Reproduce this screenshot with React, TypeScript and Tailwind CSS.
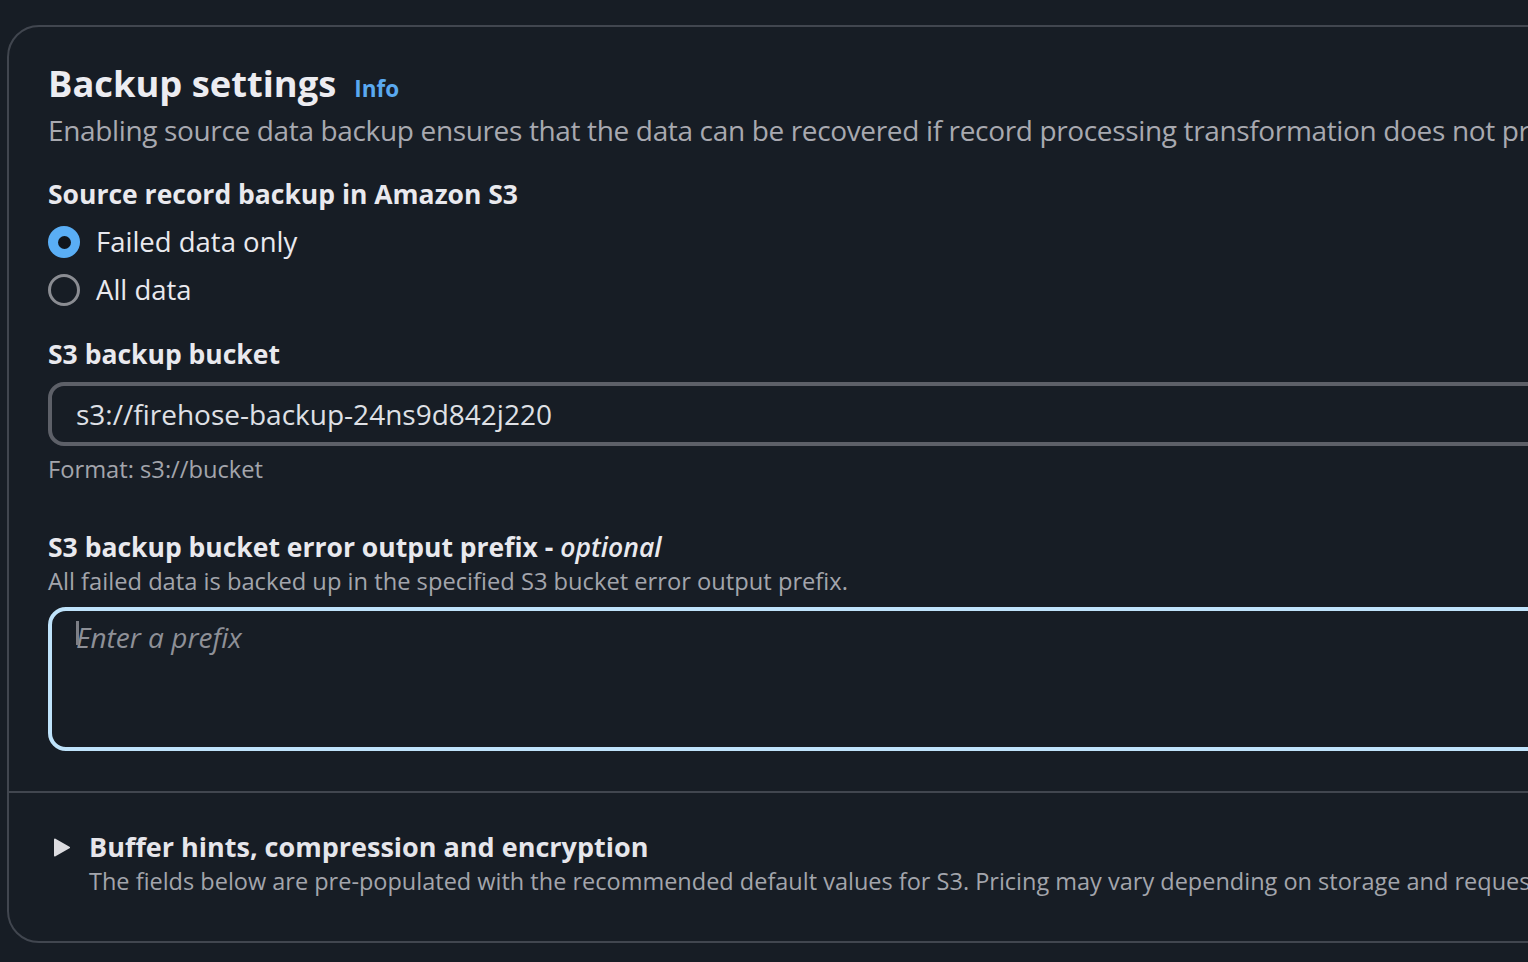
const font = { fontFamily: '"Open Sans", "Noto Sans", sans-serif' };

const labelCls = 'text-[26.5px] leading-[34px] font-bold text-[#e9e9ee]';
const hintCls = 'text-[23.7px] leading-[32px] text-[#a3a5ac]';

function Radio({ checked, label }: { checked: boolean; label: string }) {
  return (
    <div className="flex items-center h-[48px] gap-[16px]">
      {checked ? (
        <span className="w-[32px] h-[32px] rounded-full bg-[#5aaef5] flex items-center justify-center">
          <span className="w-[13px] h-[13px] rounded-full bg-[#10151c]" />
        </span>
      ) : (
        <span className="w-[32px] h-[32px] rounded-full border-[3px] border-[#8a8c92]" />
      )}
      <span className="text-[27.5px] leading-[48px] text-[#e9e9ee]">{label}</span>
    </div>
  );
}

export default function App() {
  return (
    <div className="min-h-screen h-[962px] bg-[#171d25] pt-[25px] pl-[7px] overflow-hidden" style={font}>
      <div className="w-[1600px] border-2 border-[#41464f] rounded-[32px] bg-[#171d25]">
        <div className="pl-[39px] pt-[32px] pb-[40px]">
          <div className="flex items-baseline gap-[18px]">
            <h2 className="text-[36.3px] leading-[48px] font-bold text-[#ececf1]">Backup settings</h2>
            <span className="text-[22.5px] font-bold text-[#5aa9f0]">Info</span>
          </div>
          <p className="mt-[5px] text-[28px] tracking-[-0.35px] leading-[36px] text-[#a8a9b0] whitespace-nowrap">
            Enabling source data backup ensures that the data can be recovered if record processing transformation does not produce the expected results.
          </p>

          <div className={`mt-[29px] ${labelCls}`}>Source record backup in Amazon S3</div>
          <div className="mt-[7px]">
            <Radio checked label="Failed data only" />
            <Radio checked={false} label="All data" />
          </div>

          <div className={`mt-[23px] ${labelCls}`}>S3 backup bucket</div>
          <div className="mt-[11px] h-[64px] border-4 border-[#5d6068] rounded-[16px] pl-[24px] flex items-center">
            <span className="text-[28px] leading-[56px] text-[#dfe0e5]">s3://firehose-backup-24ns9d842j220</span>
          </div>
          <div className={`mt-[7px] ${hintCls}`}>Format: s3://bucket</div>

          <div className={`mt-[45px] ${labelCls}`}>
            S3 backup bucket error output prefix - <i className="font-semibold">optional</i>
          </div>
          <div className={`mt-[1px] ${hintCls}`}>All failed data is backed up in the specified S3 bucket error output prefix.</div>
          <div className="relative mt-[10px] h-[144px] border-4 border-[#bfe3fb] rounded-[18px] pl-[24px] pt-[8px]">
            <span className="text-[28px] leading-[36px] italic text-[#8e9097]">Enter a prefix</span>
            <span className="absolute left-[24px] top-[10px] w-[3px] h-[24px] bg-[#7d7f86]" />
          </div>
        </div>

        <div className="border-t-2 border-[#41464f] pl-[45px] pt-[36px] pb-[44px]">
          <div className="flex items-center gap-[19px]">
            <svg width="16" height="19" viewBox="0 0 16 19" className="shrink-0">
              <path d="M1 1.5 L15 9.5 L1 17.5 Z" fill="#dcdce0" stroke="#dcdce0" strokeWidth="2" strokeLinejoin="round" />
            </svg>
            <span className="text-[27px] leading-[36px] font-bold text-[#e6e6eb] whitespace-nowrap">Buffer hints, compression and encryption</span>
          </div>
          <div className="pl-[35px] text-[23.5px] leading-[32px] text-[#a3a5ac] whitespace-nowrap">
            The fields below are pre-populated with the recommended default values for S3. Pricing may vary depending on storage and request costs.
          </div>
        </div>
      </div>
    </div>
  );
}
